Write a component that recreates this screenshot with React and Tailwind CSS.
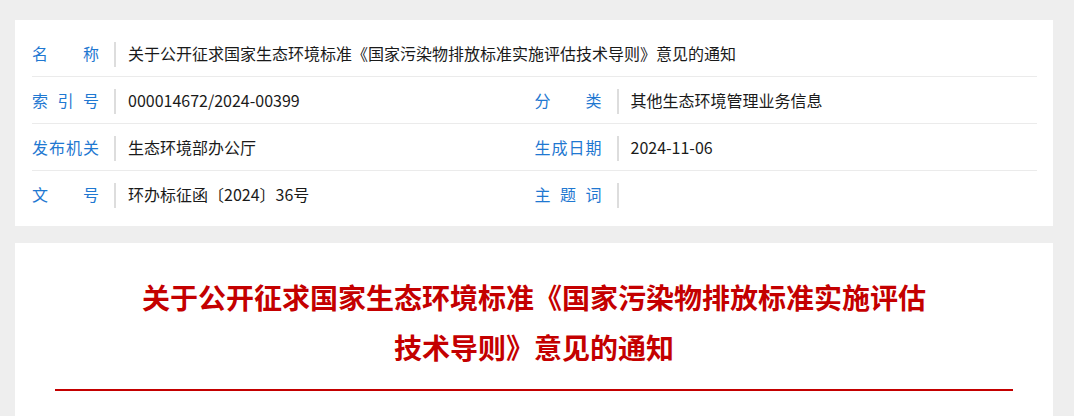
import React from "react";

const Field = ({ label, value }) => (
    <div className="flex h-[46px] items-start">
        <span className="mt-[11px] w-[67px] text-[16px] leading-[24px] text-[#1f78d1] [text-align-last:justify]">
            {label}
        </span>
        <span className="ml-[15px] mt-[12px] h-[25px] w-[2px] bg-[#dddddd]" />
        <span className="ml-[12px] mt-[11px] text-[16px] leading-[24px] text-[#1a1a1a] whitespace-nowrap">
            {value}
        </span>
    </div>
);

const App = () => {
    const rows = [
        [
            { label: "索 引 号", value: "000014672/2024-00399" },
            { label: "分 类", value: "其他生态环境管理业务信息" },
        ],
        [
            { label: "发布机关", value: "生态环境部办公厅" },
            { label: "生成日期", value: "2024-11-06" },
        ],
        [
            { label: "文 号", value: "环办标征函〔2024〕36号" },
            { label: "主 题 词", value: "" },
        ],
    ];

    return (
        <div className="min-h-screen bg-[#eeeeee] pt-[20px] pb-10 font-['Noto_Sans_CJK_SC','Noto_Sans',sans-serif]">
            <div className="ml-[15px] w-[1038px] bg-white pl-[17px] pr-[16px] pt-[10px] pb-[9px]">
                <div className="border-b border-[#ebebeb]">
                    <Field
                        label="名 称"
                        value="关于公开征求国家生态环境标准《国家污染物排放标准实施评估技术导则》意见的通知"
                    />
                </div>
                {rows.map((row, i) => (
                    <div
                        key={i}
                        className={`grid grid-cols-2 ${
                            i < rows.length - 1 ? "border-b border-[#ebebeb]" : ""
                        }`}
                    >
                        {row.map((f) => (
                            <Field key={f.label} label={f.label} value={f.value} />
                        ))}
                    </div>
                ))}
            </div>

            <div className="ml-[15px] mt-[17px] w-[1038px] bg-white px-[40px] pt-[29px] pb-16">
                <h1 className="mx-auto max-w-[800px] text-center text-[28px] leading-[50px] font-bold text-[#c40000]">
                    关于公开征求国家生态环境标准《国家污染物排放标准实施评估技术导则》意见的通知
                </h1>
                <div className="mt-[17px] h-[2px] bg-[#c40000]" />
            </div>
        </div>
    );
};

export default App;
